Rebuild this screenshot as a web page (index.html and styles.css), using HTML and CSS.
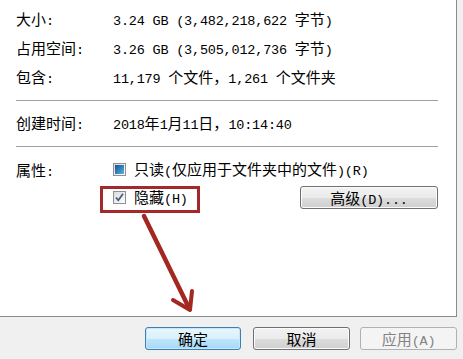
FILE: index.html
```html
<!DOCTYPE html>
<html>
<head>
<meta charset="utf-8">
<link rel="stylesheet" href="styles.css">
</head>
<body>
<div class="window">
  <div class="panel">
    <div class="grid">
      <div class="label">大小<span class="m">:</span></div>
      <div class="value"><span class="m">3.24 GB (3,482,218,622 </span>字节<span class="m">)</span></div>
      <div class="label">占用空间<span class="m">:</span></div>
      <div class="value"><span class="m">3.26 GB (3,505,012,736 </span>字节<span class="m">)</span></div>
      <div class="label">包含<span class="m">:</span></div>
      <div class="value"><span class="m">11,179 </span>个文件，<span class="m">1,261 </span>个文件夹</div>
    </div>
    <div class="sep"></div>
    <div class="grid">
      <div class="label">创建时间<span class="m">:</span></div>
      <div class="value"><span class="m">2018</span>年<span class="m">1</span>月<span class="m">11</span>日，<span class="m">10:14:40</span></div>
    </div>
    <div class="sep"></div>
    <div class="attrs">
      <div class="label">属性<span class="m">:</span></div>
      <div class="attr-list">
        <div class="check-row">
          <span class="cb cb-mixed"></span>
          <span>只读<span class="m">(</span>仅应用于文件夹中的文件<span class="m">)(R)</span></span>
        </div>
        <div class="check-row row2">
          <span class="cb"><svg viewBox="0 0 13 13" width="13" height="13"><path d="M3 6.5 L5.3 9.3 L10 2.8" fill="none" stroke="#4a5c8a" stroke-width="1.8"/></svg></span>
          <span>隐藏<span class="m">(H)</span></span>
          <button class="btn adv">高级<span class="m">(D)...</span></button>
        </div>
      </div>
    </div>
  </div>
  <div class="footer">
    <button class="btn btn-default ok">确定</button>
    <button class="btn cancel">取消</button>
    <button class="btn btn-disabled apply">应用<span class="m">(A)</span></button>
  </div>
  <div class="highlight"></div>
  <svg class="arrow" width="463" height="359" viewBox="0 0 463 359">
    <line x1="144" y1="216" x2="189" y2="308" stroke="#a3281f" stroke-width="4.5" stroke-linecap="round"/>
    <polyline points="173,300 190,310 192,291" fill="none" stroke="#a3281f" stroke-width="4" stroke-linejoin="round" stroke-linecap="round"/>
  </svg>
</div>
</body>
</html>
```

FILE: styles.css
```css
html, body {
  margin: 0;
  padding: 0;
  background: #f0f0f0;
}

.window {
  position: relative;
  width: 463px;
  height: 359px;
  background: #f0f0f0;
  overflow: hidden;
  font-family: "Noto Sans CJK SC", sans-serif;
  font-size: 15px;
  color: #000;
}

.m {
  font-family: "Liberation Mono", monospace;
  font-size: 13.5px;
  letter-spacing: -0.2px;
}

.panel {
  box-sizing: border-box;
  width: 457px;
  height: 317px;
  background: #fff;
  border-right: 1px solid #898c95;
  border-bottom: 1px solid #898c95;
  padding: 5px 18px 0 16px;
}

.grid {
  display: grid;
  grid-template-columns: 97px 1fr;
  grid-auto-rows: 29px;
  align-items: center;
  line-height: 29px;
  white-space: nowrap;
}

.sep {
  height: 1px;
  background: #a0a0a0;
  margin: 8px 0 8px 0;
}

.attrs {
  display: grid;
  grid-template-columns: 97px 1fr;
  line-height: 29px;
  white-space: nowrap;
}

.attr-list {
  display: flex;
  flex-direction: column;
}

.check-row {
  display: flex;
  align-items: center;
  height: 29px;
}

.check-row.row2 {
  height: 27px;
}

.cb {
  box-sizing: border-box;
  position: relative;
  width: 13px;
  height: 13px;
  border: 1px solid #8e8f8f;
  background: linear-gradient(135deg, #dcdcdc, #ffffff);
  margin-right: 8px;
  display: inline-block;
  flex: none;
}

.cb svg {
  position: absolute;
  left: -1px;
  top: -1px;
}

.cb-mixed::after {
  content: "";
  position: absolute;
  left: 1px;
  top: 1px;
  width: 9px;
  height: 9px;
  background: linear-gradient(135deg, #1c4d92, #3487c4 55%, #5cb6dc);
}

.btn {
  box-sizing: border-box;
  height: 23px;
  border: 1px solid #707070;
  border-radius: 3px;
  background: linear-gradient(#f2f2f2 0%, #ebebeb 50%, #dddddd 51%, #cfcfcf 100%);
  box-shadow: inset 0 0 0 1px #fbfbfb;
  font-family: "Noto Sans CJK SC", sans-serif;
  font-size: 15px;
  line-height: 21px;
  color: #000;
  padding: 0;
}

.adv {
  margin-left: auto;
  width: 138px;
}

.footer {
  display: flex;
  align-items: flex-start;
  padding: 10px 0 0 145px;
}

.ok {
  width: 96px;
  margin-right: 12px;
}

.cancel {
  width: 97px;
  margin-right: 10px;
}

.apply {
  width: 97px;
}

.btn-default {
  border-color: #3c7fb1;
  background: linear-gradient(#eaf6fd 0%, #d9f0fc 50%, #bee6fd 51%, #a7d9f5 100%);
  box-shadow: inset 0 0 0 1px #c4e7fb;
}

.btn-disabled {
  border-color: #adb2b5;
  background: #f4f4f4;
  box-shadow: none;
  color: #838383;
}

.highlight {
  position: absolute;
  left: 100px;
  top: 186px;
  width: 100px;
  height: 27px;
  box-sizing: border-box;
  border: 3px solid #a3292b;
}

.arrow {
  position: absolute;
  left: 0;
  top: 0;
  pointer-events: none;
}
```
